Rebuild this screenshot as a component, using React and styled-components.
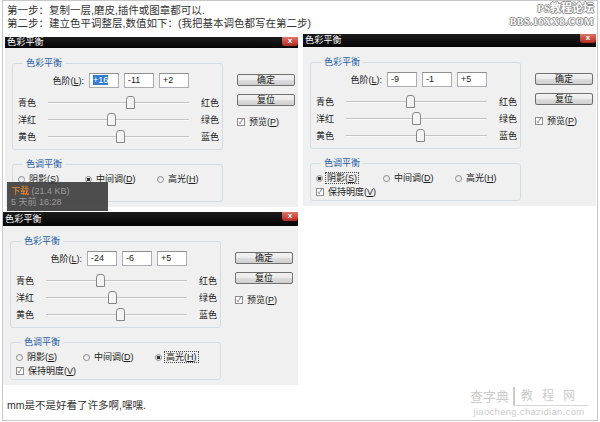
import React from "react";
import styled, { createGlobalStyle } from "styled-components";

const FONT = `"Liberation Sans", "Noto Sans CJK SC", sans-serif`;

const GlobalStyle = createGlobalStyle`
  html, body {
    margin: 0;
    padding: 0;
    background: #fff;
  }
  body {
    font-family: ${FONT};
  }
`;

const Frame = styled.div`
  position: relative;
  box-sizing: border-box;
  width: 596px;
  height: 421px;
  margin-left: 2px;
  border: 1px solid #c8c8c8;
  overflow: hidden;
`;

const Intro = styled.div`
  padding: 3px 0 0 4px;
`;

const Note = styled.p`
  margin: 0;
  font-size: 10.5px;
  line-height: 13px;
  color: #333;
  white-space: nowrap;
`;

const Outro = styled(Note)`
  margin-top: 14px;
  padding-left: 4px;
`;

const DialogGrid = styled.div`
  display: grid;
  grid-template-columns: 293px 293px;
  column-gap: 5px;
  row-gap: 5px;
  align-items: start;
  margin: 4px 0 0 2px;
`;

const Window = styled.div`
  margin-top: ${(p) => p.$top || 0}px;
  margin-left: ${(p) => p.$shift || 0}px;
  background: #f0f0f0;
  font-size: 9px;
  color: #1a1a1a;
`;

const TitleBar = styled.div`
  display: flex;
  justify-content: space-between;
  align-items: flex-start;
  height: ${(p) => p.$h}px;
  background: linear-gradient(#1c1c1c, #050505);
  color: #fff;
  padding-left: 2px;
`;

const TitleText = styled.span`
  font-size: 9px;
  line-height: ${(p) => p.$h}px;
  letter-spacing: 0.2px;
`;

const CloseBtn = styled.span`
  width: 16px;
  height: 9px;
  background: linear-gradient(#dd7468, #b5291f);
  border-radius: 0 0 3px 3px;
  color: #fff;
  font-size: 8px;
  font-weight: bold;
  line-height: 8px;
  text-align: center;
`;

const Body = styled.div`
  display: flex;
  gap: 14px;
  padding: 10px 3px 5px 7px;
`;

const LeftCol = styled.div`
  width: 211px;
`;

const RightCol = styled.div`
  width: 58px;
  padding-top: 16px;
  display: flex;
  flex-direction: column;
  gap: 8px;
`;

const Group = styled.fieldset`
  margin: ${(p) => (p.$second ? "9px 0 0" : "0")};
  padding: 0 0 ${(p) => (p.$second ? 1 : 4)}px;
  min-inline-size: 0;
  border: 1px solid #d3dce2;
  border-radius: 3px;
`;

const Legend = styled.legend`
  margin-left: 10px;
  padding: 0 3px;
  font-size: 9px;
  line-height: 10px;
  color: #1f5fa6;
`;

const LevelRow = styled.div`
  display: flex;
  justify-content: flex-end;
  align-items: center;
  gap: 5px;
  width: 176px;
  height: 15px;
  margin-top: 5px;
  margin-bottom: 6px;
`;

const NumBox = styled.span`
  box-sizing: border-box;
  width: 30px;
  height: 15px;
  background: #fff;
  border: 1px solid #abadb3;
  border-top-color: #8e8f8f;
  padding-left: 3px;
  font-size: 9px;
  line-height: 13px;
`;

const Selected = styled.span`
  background: #2f7bd6;
  color: #fff;
`;

const SliderRow = styled.div`
  display: flex;
  align-items: center;
  height: 17px;
  padding-left: 5px;
`;

const SideLabel = styled.span`
  width: 30px;
  font-size: 9px;
`;

const Track = styled.div`
  position: relative;
  width: 141px;
  height: 1px;
  background: #c4c4c4;
  border-bottom: 1px solid #fafafa;
`;

const Thumb = styled.svg`
  position: absolute;
  top: -6px;
  margin-left: -4px;
  width: 9px;
  height: 13px;
`;

const EndLabel = styled.span`
  margin-left: 12px;
  font-size: 9px;
`;

const RadioRow = styled.div`
  display: grid;
  grid-template-columns: 67px 72px auto;
  align-items: center;
  height: 14px;
  margin-top: 3px;
  padding-left: 5px;
`;

const Option = styled.span`
  display: flex;
  align-items: center;
  gap: 3px;
`;

const OptText = styled.span`
  font-size: 9px;
  line-height: 10px;
  padding: 0 1px;
  outline: ${(p) => (p.$focus ? "1px dotted #444" : "none")};
`;

const RadioDot = styled.span`
  box-sizing: border-box;
  width: 7px;
  height: 7px;
  border-radius: 50%;
  border: 1px solid #8c8c8c;
  background: ${(p) =>
    p.$on
      ? "radial-gradient(circle, #333 0 1.5px, #e8e8e8 2px)"
      : "linear-gradient(#e2e2e2, #fbfbfb)"};
`;

const CheckRow = styled.div`
  display: flex;
  align-items: center;
  gap: 3px;
  height: 14px;
  padding-left: ${(p) => p.$pad || 0}px;
  visibility: ${(p) => (p.$hidden ? "hidden" : "visible")};
`;

const CheckBox = styled.span`
  box-sizing: border-box;
  width: 8px;
  height: 8px;
  border: 1px solid #8c8c8c;
  background: #fff;
  color: #555;
  font-size: 7px;
  line-height: 6px;
  text-align: center;
`;

const Button = styled.div`
  box-sizing: border-box;
  height: 12px;
  border: 1px solid #707070;
  border-radius: 2px;
  background: linear-gradient(#f2f2f2 0%, #ebebeb 50%, #dddddd 51%, #cfcfcf 100%);
  font-size: 9px;
  line-height: 10px;
  text-align: center;
`;

const PreviewRow = styled(CheckRow)`
  margin-top: 1px;
`;

const Tooltip = styled.div`
  position: absolute;
  left: 4px;
  top: 181px;
  box-sizing: border-box;
  width: 101px;
  height: 29px;
  padding: 4px 4px 2px;
  background: rgba(66, 66, 66, 0.94);
  color: #9a9a9a;
  font-size: 9px;
  line-height: 11px;
`;

const Orange = styled.span`
  color: #f08a24;
`;

const MarkTop = styled.div`
  position: absolute;
  right: 3px;
  top: 1px;
  text-align: right;
  font-family: "Liberation Serif", "Noto Sans CJK SC", serif;
  color: #fff;
  text-shadow: 1px 0 #8a8a8a, -1px 0 #8a8a8a, 0 1px #8a8a8a, 0 -1px #8a8a8a;
`;

const MarkLine = styled.div`
  font-size: ${(p) => p.$size}px;
  line-height: 13px;
  font-weight: bold;
  letter-spacing: ${(p) => p.$spacing || 0}px;
`;

const MarkBottom = styled.div`
  position: absolute;
  right: 9px;
  bottom: 2px;
  color: #cbcbcb;
  text-align: center;
`;

const MarkBrand = styled.div`
  display: flex;
  align-items: center;
  gap: 4px;
  font-size: 13px;
  line-height: 18px;
`;

const MarkBox = styled.span`
  border-left: 2px solid #cbcbcb;
  border-bottom: 1px solid #d8d8d8;
  padding: 0 4px 0 6px;
  letter-spacing: 9px;
  font-size: 12px;
`;

const MarkUrl = styled.div`
  font-size: 9.5px;
  line-height: 12px;
  letter-spacing: 0.3px;
`;

const thumbPos = (v) => `${((v + 100) / 200) * 100}%`;

const SliderLine = ({ left, right, value }) => (
  <SliderRow>
    <SideLabel>{left}</SideLabel>
    <Track>
      <Thumb viewBox="0 0 9 13" style={{ left: thumbPos(value) }}>
        <path
          d="M0.5 3.5 Q0.5 0.5 3 0.5 H6 Q8.5 0.5 8.5 3.5 V12.5 H0.5 Z"
          fill="#f3f3f3"
          stroke="#858585"
        />
        <path d="M2 4 V11" stroke="#fff" />
      </Thumb>
    </Track>
    <EndLabel>{right}</EndLabel>
  </SliderRow>
);

const ColorBalance = ({ values, tone, focus, titleH, top, shift, selectFirst, covered }) => (
  <Window $top={top} $shift={shift}>
    <TitleBar $h={titleH}>
      <TitleText $h={titleH}>色彩平衡</TitleText>
      <CloseBtn>x</CloseBtn>
    </TitleBar>
    <Body>
      <LeftCol>
        <Group>
          <Legend>色彩平衡</Legend>
          <LevelRow>
            <span>
              色阶(<u>L</u>):
            </span>
            {values.map((v, i) => (
              <NumBox key={i}>{selectFirst && i === 0 ? <Selected>{v}</Selected> : v}</NumBox>
            ))}
          </LevelRow>
          <SliderLine left="青色" right="红色" value={Number(values[0])} />
          <SliderLine left="洋红" right="绿色" value={Number(values[1])} />
          <SliderLine left="黄色" right="蓝色" value={Number(values[2])} />
        </Group>
        <Group $second>
          <Legend>色调平衡</Legend>
          <RadioRow>
            <Option>
              <RadioDot $on={tone === "s"} />
              <OptText $focus={focus && tone === "s"}>
                阴影(<u>S</u>)
              </OptText>
            </Option>
            <Option>
              <RadioDot $on={tone === "m"} />
              <OptText $focus={focus && tone === "m"}>
                中间调(<u>D</u>)
              </OptText>
            </Option>
            <Option>
              <RadioDot $on={tone === "h"} />
              <OptText $focus={focus && tone === "h"}>
                高光(<u>H</u>)
              </OptText>
            </Option>
          </RadioRow>
          {/* under the download tooltip in the first shot */}
          <CheckRow $pad={5} $hidden={covered}>
            <CheckBox>✓</CheckBox>
            <OptText>
              保持明度(<u>V</u>)
            </OptText>
          </CheckRow>
        </Group>
      </LeftCol>
      <RightCol>
        <Button>确定</Button>
        <Button>复位</Button>
        <PreviewRow>
          <CheckBox>✓</CheckBox>
          <OptText>
            预览(<u>P</u>)
          </OptText>
        </PreviewRow>
      </RightCol>
    </Body>
  </Window>
);

export default function App() {
  return (
    <>
      <GlobalStyle />
      <Frame>
        <Intro>
          <Note>第一步：复制一层,磨皮,插件或图章都可以.</Note>
          <Note>第二步：建立色平调整层,数值如下：(我把基本调色都写在第二步)</Note>
        </Intro>
        <DialogGrid>
          <ColorBalance values={["+16", "-11", "+2"]} tone="m" titleH={11} top={3} selectFirst covered />
          <ColorBalance values={["-9", "-1", "+5"]} tone="s" focus titleH={13} />
          <ColorBalance values={["-24", "-6", "+5"]} tone="h" focus titleH={14} shift={-2} />
        </DialogGrid>
        <Outro>mm是不是好看了许多啊,嘿嘿.</Outro>

        <Tooltip>
          <div>
            <Orange>下载</Orange> (21.4 KB)
          </div>
          <div>5 天前 16:28</div>
        </Tooltip>

        <MarkTop>
          <MarkLine $size={11}>PS教程论坛</MarkLine>
          <MarkLine $size={10} $spacing={0.5}>BBS.16XX8.COM</MarkLine>
        </MarkTop>

        <MarkBottom>
          <MarkBrand>
            <span>查字典</span>
            <MarkBox>教程网</MarkBox>
          </MarkBrand>
          <MarkUrl>jiaocheng.chazidian.com</MarkUrl>
        </MarkBottom>
      </Frame>
    </>
  );
}
